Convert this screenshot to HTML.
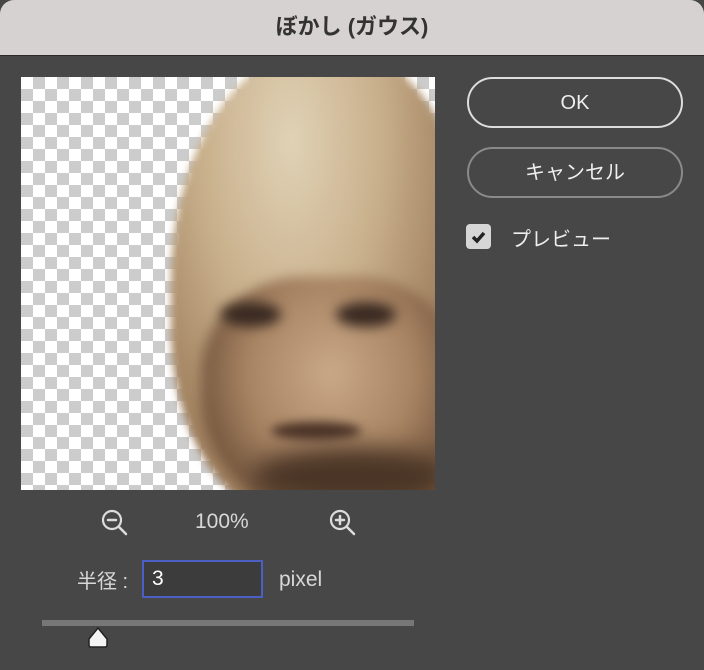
<!DOCTYPE html>
<html><head><meta charset="utf-8"><style>
*{margin:0;padding:0;box-sizing:border-box}
body{width:704px;height:670px;background:#474747;font-family:"Liberation Sans","Noto Sans CJK JP",sans-serif;position:relative;overflow:hidden}
.title{position:absolute;left:0;top:0;width:704px;height:56px;background:#d7d2d2;border-radius:14px 14px 0 0;text-align:center;line-height:54px;font-size:22px;font-weight:bold;color:#333;border-bottom:1px solid #2a2a2a}
.prev{position:absolute;left:21px;top:77px;width:414px;height:413px;overflow:hidden;
background-color:#fff;background-image:linear-gradient(45deg,#ccc 25%,transparent 25%,transparent 75%,#ccc 75%),linear-gradient(45deg,#ccc 25%,transparent 25%,transparent 75%,#ccc 75%);background-size:24px 24px;background-position:0 0,12px 12px}
.btn{position:absolute;left:467px;width:216px;height:51px;border-radius:26px;text-align:center;line-height:48px;color:#eee;font-size:20px}
.t{position:absolute;color:#d8d8d8;font-size:20px}
</style></head><body>
<div class="title">ぼかし (ガウス)</div>
<div class="prev">
<div style="position:absolute;left:150px;top:-30px;width:300px;height:470px;border-radius:50% 45% 20% 40%;background:radial-gradient(ellipse at 40% 20%,#e0d2b6 0%,#c9b08c 35%,#9c7b59 70%,#6b4c35 100%);filter:blur(4px)"></div>
<div style="position:absolute;left:180px;top:200px;width:260px;height:240px;border-radius:40% 40% 50% 50%;background:radial-gradient(ellipse at 50% 40%,#c9a987 0%,#a88463 45%,#5e432f 85%);filter:blur(6px)"></div>
<div style="position:absolute;left:230px;top:370px;width:200px;height:60px;background:#4a3526;border-radius:50%;filter:blur(12px)"></div>
<div style="position:absolute;left:200px;top:225px;width:60px;height:25px;background:#3a2a22;border-radius:50%;filter:blur(6px)"></div>
<div style="position:absolute;left:315px;top:225px;width:60px;height:25px;background:#3a2a22;border-radius:50%;filter:blur(6px)"></div>
<div style="position:absolute;left:250px;top:345px;width:90px;height:18px;background:#4a3226;border-radius:50%;filter:blur(5px)"></div>
</div>
<div class="btn" style="top:77px;border:2px solid #ddd">OK</div>
<div class="btn" style="top:147px;border:2px solid #8a8a8a">キャンセル</div>
<div style="position:absolute;left:466px;top:224px;width:25px;height:25px;background:#d6d6d6;border-radius:4px"><svg width="25" height="25"><path d="M7 13l4 4 7-8" stroke="#222" stroke-width="3.5" fill="none"/></svg></div>
<div class="t" style="left:511px;top:223px;color:#eee">プレビュー</div>
<svg style="position:absolute;left:100px;top:508px" width="30" height="30"><circle cx="12" cy="12" r="9" stroke="#ddd" stroke-width="2.2" fill="none"/><path d="M8 12h8M19 19l7 7" stroke="#ddd" stroke-width="2.5" stroke-linecap="round"/></svg>
<div class="t" style="left:195px;top:510px;font-size:21px">100%</div>
<svg style="position:absolute;left:328px;top:508px" width="30" height="30"><circle cx="12" cy="12" r="9" stroke="#ddd" stroke-width="2.2" fill="none"/><path d="M8 12h8M12 8v8M19 19l7 7" stroke="#ddd" stroke-width="2.5" stroke-linecap="round"/></svg>
<div class="t" style="left:77px;top:565px">半径 :</div>
<div style="position:absolute;left:142px;top:560px;width:121px;height:38px;border:2px solid #4b5fc4;background:#3c3c3c;color:#fff;font-size:21px;line-height:34px;padding-left:8px">3</div>
<div class="t" style="left:279px;top:568px;font-size:21px">pixel</div>
<div style="position:absolute;left:42px;top:620px;width:372px;height:6px;background:#777"></div>
<svg style="position:absolute;left:86px;top:626px" width="26" height="24"><path d="M12 2L3 13v6q0 2 2 2h14q2 0 2-2v-6z" fill="#f4f4f4" stroke="#222" stroke-width="1.5" stroke-linejoin="round"/></svg>
</body></html>
